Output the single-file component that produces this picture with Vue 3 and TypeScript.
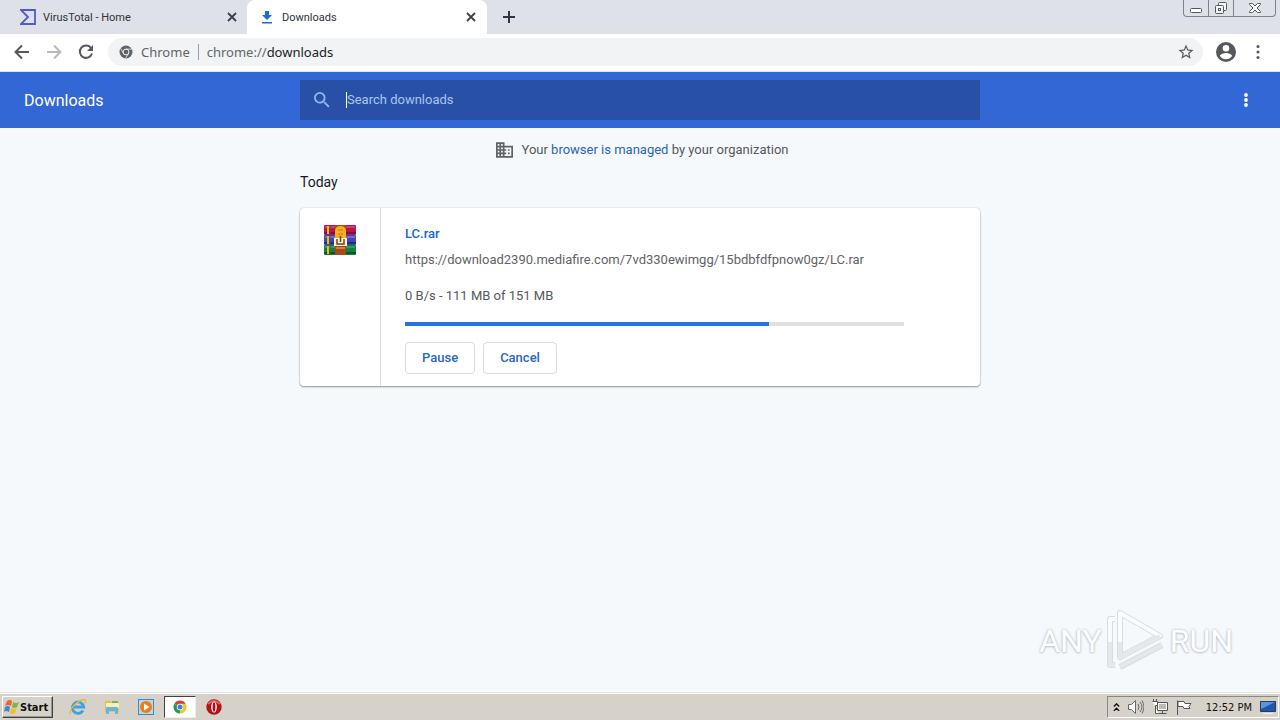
<script setup lang="ts">
import { ref } from 'vue'

interface Tab {
  id: string
  title: string
  active: boolean
}

const tabs: Tab[] = [
  { id: 'virustotal', title: 'VirusTotal - Home', active: false },
  { id: 'downloads', title: 'Downloads', active: true },
]

const query = ref('')
const progress = ref(73)
</script>

<template>
  <div class="screen">
    <header class="tabstrip">
      <div v-for="tab in tabs" :key="tab.id" class="tab" :class="{ active: tab.active }">
        <svg v-if="tab.id === 'virustotal'" class="favicon" viewBox="0 0 16 16" aria-hidden="true">
          <path d="M1 1H15V15H1L8 8Z" fill="none" stroke="#5257d6" stroke-width="1.8" />
        </svg>
        <svg v-else class="favicon" viewBox="0 0 16 16" aria-hidden="true">
          <path d="M6 2h4v4h3L8 11 3 6h3zM3 13h10v1.500H3z" fill="#1a6dd6" />
        </svg>
        <span class="tab-title">{{ tab.title }}</span>
        <button class="tab-close" :aria-label="`Close ${tab.title}`">
          <svg viewBox="0 0 10 10"><path d="M1 1l8 8M9 1L1 9" stroke="#3c4043" stroke-width="1.800" /></svg>
        </button>
      </div>
      <button class="new-tab" aria-label="New tab">
        <svg viewBox="0 0 12 12"><path d="M6 0v12M0 6h12" stroke="#33373b" stroke-width="2" /></svg>
      </button>
      <div class="window-controls">
        <button class="wc" aria-label="Minimize">
          <svg width="14" height="14" viewBox="0 0 14 14"><rect x="1.500" y="7.500" width="11" height="4" rx="1" fill="#fff" stroke="#555961" /></svg>
        </button>
        <button class="wc" aria-label="Restore">
          <svg width="14" height="14" viewBox="0 0 14 14" fill="#f4f5f7" stroke="#555961">
            <rect x="4.500" y="1.500" width="8" height="8" rx="1" />
            <rect x="1.500" y="4.500" width="8" height="8" rx="1" />
            <rect x="4.500" y="7.500" width="2" height="2" />
          </svg>
        </button>
        <button class="wc wide" aria-label="Close">
          <svg width="14" height="14" viewBox="0 0 14 14"><path d="M1.500 2.500h3L7 5l2.500-2.500h3v1L9 7l3.500 3.500v1h-3L7 9l-2.500 2.500h-3v-1L5 7 1.500 3.500z" fill="#fff" stroke="#555961" /></svg>
        </button>
      </div>
    </header>

    <nav class="toolbar" aria-label="Browser toolbar">
      <button class="tool" aria-label="Back">
        <svg viewBox="0 0 16 16" fill="none" stroke="#55585c" stroke-width="2"><path d="M15 8H2M8 1.500L1.500 8 8 14.500" /></svg>
      </button>
      <button class="tool" aria-label="Forward" disabled>
        <svg viewBox="0 0 16 16" fill="none" stroke="#b7babd" stroke-width="2"><path d="M1 8h13M8 1.500L14.500 8 8 14.500" /></svg>
      </button>
      <button class="tool" aria-label="Reload">
        <svg viewBox="0 0 16 16"><path d="M13.100 4A6.200 6.200 0 1 0 14 9.500" fill="none" stroke="#55585c" stroke-width="2" /><path d="M15 1v6H9z" fill="#55585c" /></svg>
      </button>
      <div class="omnibox">
        <svg class="site-icon" viewBox="0 0 14 14" aria-hidden="true">
          <circle cx="7" cy="7" r="6.500" fill="#5f6368" />
          <circle cx="7" cy="7" r="2.900" fill="#5f6368" stroke="#f1f3f4" stroke-width="1" />
          <path d="M7 4.100H13M4.500 8.500L1.700 3.500M9.500 8.500L6.500 13.400" stroke="#f1f3f4" stroke-width=".8" />
        </svg>
        <span class="site">Chrome</span>
        <span class="divider"></span>
        <span class="url"><span class="scheme">chrome://</span>downloads</span>
        <button class="star" aria-label="Bookmark this page">
          <svg viewBox="0 0 24 24" fill="#55585c"><path d="M22 9.240l-7.190-.62L12 2 9.190 8.630 2 9.240l5.460 4.730L5.820 21 12 17.270 18.180 21l-1.630-7.030L22 9.240zM12 15.400l-3.760 2.270 1-4.280-3.320-2.880 4.380-.38L12 6.100l1.710 4.040 4.380.38-3.320 2.880 1 4.280L12 15.400z" /></svg>
        </button>
      </div>
      <button class="profile" aria-label="Profile">
        <svg viewBox="2 2 20 20" fill="#55585c"><path d="M12 2a10 10 0 1 0 0 20 10 10 0 0 0 0-20zm0 3a3.300 3.300 0 1 1 0 6.600A3.300 3.300 0 0 1 12 5zm0 14.200a7.200 7.200 0 0 1-6-3.220c.03-1.990 4-3.080 6-3.080s5.970 1.090 6 3.080a7.200 7.200 0 0 1-6 3.220z" /></svg>
      </button>
      <button class="menu" aria-label="Chrome menu">
        <svg viewBox="0 0 4 16" fill="#55585c"><circle cx="2" cy="2.500" r="1.500" /><circle cx="2" cy="8" r="1.500" /><circle cx="2" cy="13.500" r="1.500" /></svg>
      </button>
    </nav>

    <div class="page">
      <header class="page-header">
        <h1>Downloads</h1>
        <label class="search">
          <svg viewBox="3 3 18 18" fill="#93b7ee" aria-hidden="true"><path d="M15.500 14h-.79l-.28-.27A6.470 6.470 0 0 0 16 9.500 6.500 6.500 0 1 0 9.500 16c1.610 0 3.090-.59 4.230-1.570l.27.280v.79l5 4.990L20.490 19l-4.990-5zm-6 0C7.010 14 5 11.990 5 9.500S7.010 5 9.500 5 14 7.010 14 9.500 11.990 14 9.500 14z" /></svg>
          <span class="caret"></span>
          <input v-model="query" type="text" placeholder="Search downloads" aria-label="Search downloads" />
        </label>
        <button class="more" aria-label="More actions">
          <svg viewBox="0 0 4 16" fill="#fff"><circle cx="2" cy="3" r="1.900" /><circle cx="2" cy="8" r="1.900" /><circle cx="2" cy="13" r="1.900" /></svg>
        </button>
      </header>

      <main>
        <p class="managed">
          <svg viewBox="2 3 20 18" fill="#5f6368" aria-hidden="true"><path d="M12 7V3H2v18h20V7H12zM6 19H4v-2h2v2zm0-4H4v-2h2v2zm0-4H4V9h2v2zm0-4H4V5h2v2zm4 12H8v-2h2v2zm0-4H8v-2h2v2zm0-4H8V9h2v2zm0-4H8V5h2v2zm10 12h-8v-2h2v-2h-2v-2h2v-2h-2V9h8v10zm-2-8h-2v2h2v-2zm0 4h-2v2h2v-2z" /></svg>
          <span>Your <a href="#">browser is managed</a> by your organization</span>
        </p>
        <h2>Today</h2>
        <article class="card">
          <div class="file-icon">
            <svg viewBox="0 0 32 32" aria-hidden="true">
              <rect y="1" width="32" height="10" rx="1" fill="#b3174b" />
              <path d="M1 3h30" stroke="#d0406c" stroke-width="2" />
              <path d="M0 9h32" stroke="#85103a" stroke-width="2" />
              <rect y="11" width="32" height="10" rx="1" fill="#3d46b5" />
              <path d="M1 13h30" stroke="#686fd0" stroke-width="2" />
              <path d="M0 19h32" stroke="#252c83" stroke-width="2" />
              <rect y="21" width="32" height="10" rx="1" fill="#13803d" />
              <path d="M1 23h30" stroke="#30a055" stroke-width="2" />
              <path d="M0 29h32" stroke="#07572a" stroke-width="2" />
              <path d="M4 2v8M4 12v8M4 22v8" stroke="#e9b927" stroke-width="2" />
              <path d="M6 2v8M6 12v8M6 22v8" stroke="#704d22" />
              <rect x="11" y="1" width="11" height="30" fill="#a34b1d" />
              <path d="M11 14V6q1-4 5.500-4T22 6v8z" fill="#f5ad22" />
              <path d="M14 6h5M14 10h5" stroke="#d98a17" stroke-width="1.500" />
              <rect x="10" y="14" width="13" height="8" fill="#fff1db" />
              <path d="M13 15v5h7v-5M16.500 12v6" fill="none" stroke="#74401d" stroke-width="1.500" />
              <path d="M12 24h9" stroke="#d37a3e" stroke-width="2" />
            </svg>
          </div>
          <div class="details">
            <a class="file-name" href="#">LC.rar</a>
            <a class="file-url" href="#">https://download2390.mediafire.com/7vd330ewimgg/15bdbfdfpnow0gz/LC.rar</a>
            <p class="status">0 B/s - 111 MB of 151 MB</p>
            <div class="track" role="progressbar" aria-label="Download progress" :aria-valuenow="progress" aria-valuemin="0" aria-valuemax="100">
              <div class="bar" :style="{ width: `${progress}%` }"></div>
            </div>
            <div class="actions">
              <button>Pause</button>
              <button>Cancel</button>
            </div>
          </div>
        </article>
      </main>

      <div class="watermark">
        <span>ANY</span>
        <svg viewBox="0 0 60 66" fill="none" aria-hidden="true">
          <g stroke="#d9dde0" stroke-width="6" stroke-linejoin="round">
            <path d="M9 11H4v46h5" />
            <path d="M14 5v44L54 28z" />
            <path d="M14 59l42-22" />
          </g>
          <g stroke="#fafcfd" stroke-width="4" stroke-linejoin="round">
            <path d="M9 11H4v46h5" />
            <path d="M14 5v44L54 28z" />
          </g>
          <path d="M4 34v23h5M14 59l42-22M14 34v15l40-21" stroke="#e5e7e9" stroke-width="4" stroke-linejoin="round" />
        </svg>
        <span>RUN</span>
      </div>
    </div>

    <footer class="taskbar">
      <button class="start">
        <svg viewBox="0 0 16 16" aria-hidden="true">
          <path d="M3 2q3-2 5 0L7 7Q4 5 1 7z" fill="#ec652a" />
          <path d="M9 3q3 2 6 0l-2 5q-3 2-5 0z" fill="#7bb83a" />
          <path d="M1 8q3-2 5 0l-1 5q-3-2-5 0z" fill="#3888d8" />
          <path d="M7 9q3 2 6 0l-2 5q-3 2-5 0z" fill="#f5be25" />
        </svg>
        Start
      </button>
      <div class="launchers">
        <button class="task" aria-label="Internet Explorer">
          <svg viewBox="0 0 18 18" fill="none">
            <path d="M14 12.500A5.700 5.700 0 1 1 14.700 9H5" stroke="#3ba4e4" stroke-width="2.800" />
            <path d="M2 16C-2 14 8 2 15.500 1.500q2 1 .5 3.500" stroke="#e8b936" stroke-width="1.300" />
          </svg>
        </button>
        <button class="task" aria-label="Windows Explorer">
          <svg viewBox="0 0 18 18">
            <path d="M2 3h5l1 1h8v10H2z" fill="#e7bd4d" />
            <path d="M3 5h13v5H3z" fill="#faf0b3" /><path d="M9 4h6" stroke="#4eae5c" stroke-width="1.500" />
            <path d="M3 16V10q0-1 1-1h10q1 0 1 1v6h-3v-3H6v3z" fill="#66b6de" />
          </svg>
        </button>
        <button class="task" aria-label="Media Player">
          <svg viewBox="0 0 18 18">
            <rect x="1.500" y="1.500" width="15" height="15" fill="#b7d8f1" stroke="#4786bd" />
            <circle cx="9" cy="9" r="6" fill="#f07b12" /><path d="M7 5.500L12.500 9 7 12.500z" fill="#fff" />
          </svg>
        </button>
        <button class="task current" aria-label="Google Chrome">
          <svg viewBox="0 0 18 18">
            <path d="M9 9L3.370 5.750A6.500 6.500 0 0 1 14.630 5.750z" fill="#df3c30" />
            <path d="M9 9L3.370 5.750A6.500 6.500 0 0 0 9 15.500z" fill="#249c50" />
            <path d="M9 9V15.500A6.500 6.500 0 0 0 14.630 5.750L9 5.750z" fill="#f8c622" />
            <circle cx="9" cy="9" r="3.200" fill="#fff" /><circle cx="9" cy="9" r="2.500" fill="#3c7de4" />
          </svg>
        </button>
        <button class="task" aria-label="Opera">
          <svg viewBox="0 0 18 18"><circle cx="9" cy="9" r="7.700" fill="#b31318" /><path d="M3 6q6-6 12 0" stroke="#dc6565" stroke-width="2" fill="none" /><ellipse cx="9" cy="9" rx="2.800" ry="5.500" fill="#fff" /><ellipse cx="9" cy="9" rx="1.400" ry="4.700" fill="#a81217" /></svg>
        </button>
      </div>
      <div class="tray">
        <button class="tray-button chevrons" aria-label="Show hidden icons">
          <svg viewBox="0 0 8 10" fill="none" stroke="#111" stroke-width="1.600"><path d="M1 4l3-3 3 3M1 9l3-3 3 3" /></svg>
        </button>
        <button class="tray-button" aria-label="Volume">
          <svg viewBox="0 0 16 16" fill="#fff" stroke="#686868"><path d="M.5 5.500h3l4-4v13l-4-4h-3z" /><path d="M10 5q2 3 0 6M12 3q4 5 0 10M14 1.500q4 6.500 0 13" fill="none" /></svg>
        </button>
        <button class="tray-button" aria-label="Network">
          <svg viewBox="0 0 16 16" fill="#fff" stroke="#555"><path d="M5.500 3.500h10v8h-10zM6.500 14.500h8M10.500 11.500v3" /><path d="M7 5h7v5H7z" fill="#bbb" stroke="none" /><path d="M.5 2.500h5v4h-2v8h3" /><path d="M1.500 0v2M4.500 0v2" /></svg>
        </button>
        <button class="tray-button" aria-label="Action Center">
          <svg viewBox="0 0 16 16" fill="#fff" stroke="#555"><path d="M1.500 1.500V16" /><path d="M2 2.500h6l1 2h6l-2 3 1 2H8l-1-2H2z" /></svg>
        </button>
        <time>12:52 PM</time>
        <button class="tray-button" aria-label="Show desktop">
          <svg viewBox="0 0 16 16"><path d="M.5 2.500h15v10H.5z" fill="#1e57ac" stroke="#263c5d" /><path d="M1 3h14L1 10z" fill="#5b97df" /><path d="M3 14.500h10" stroke="#eee" /></svg>
        </button>
      </div>
    </footer>
  </div>
</template>

<style>
body {
  margin: 0;
}
</style>

<style scoped>
* {
  box-sizing: border-box;
}
button {
  padding: 0;
  border: 0;
  background: none;
  font: inherit;
  color: inherit;
}
svg {
  display: block;
  flex: none;
}
h1,
h2,
p {
  margin: 0;
  font-weight: 400;
}
a {
  color: #2663c4;
  text-decoration: none;
}
.screen {
  display: flex;
  flex-direction: column;
  min-height: 100vh;
  background: #f6f9fc;
  font-family: Roboto, sans-serif;
  font-size: 13px;
  color: #55585c;
}

.tabstrip {
  display: flex;
  height: 34px;
  background: #dee1e8;
  font-size: 11px;
  color: #303236;
}
.tab {
  display: flex;
  align-items: center;
  width: 240px;
  padding: 0 8px 0 12px;
}
.tab:first-child {
  width: 247px;
  padding-left: 20px;
  padding-right: 7px;
}
.tab.active {
  background: #fff;
  border-radius: 8px 8px 0 0;
}
.favicon {
  width: 16px;
  height: 16px;
}
.tab-title {
  flex: 1;
  margin-left: 7px;
}
.tab-close {
  padding: 3px;
}
.tab-close svg {
  width: 10px;
  height: 10px;
}
.new-tab {
  padding: 0 16px;
}
.new-tab svg {
  width: 12px;
  height: 12px;
}
.window-controls {
  display: flex;
  height: 17px;
  margin-left: auto;
  margin-right: 4px;
  border: 1px solid #7f838b;
  border-top: 0;
  border-radius: 0 0 4px 4px;
}
.wc {
  display: grid;
  place-items: center;
  width: 25px;
  border-right: 1px solid #7f838b;
}
.wc.wide {
  width: 41px;
  border-right: 0;
}

.toolbar {
  display: flex;
  align-items: center;
  height: 38px;
  padding: 0 20px 2px 14px;
  background: #fff;
  border-bottom: 1px solid #dfe3ea;
}
.tool {
  width: 16px;
  margin-right: 16px;
}
.tool:nth-child(3) {
  margin-right: 14px;
}
.omnibox {
  display: flex;
  flex: 1;
  align-items: center;
  height: 28px;
  padding: 0 8px 0 11px;
  background: #f1f3f4;
  border-radius: 14px;
  font-family: "Noto Sans", sans-serif;
  font-size: 13px;
  color: #202124;
}
.site-icon {
  width: 14px;
  height: 14px;
}
.site {
  margin-left: 8px;
  color: #5f6368;
}
.divider {
  width: 1px;
  height: 16px;
  margin: 0 8px;
  background: #9b9ea2;
}
.scheme {
  color: #63676b;
}
.star {
  width: 18px;
  margin-left: auto;
}
.profile {
  width: 20px;
  margin-left: 13px;
}
.menu {
  width: 4px;
  margin-left: 20px;
}

.page {
  position: relative;
  flex: 1;
}
.page-header {
  display: grid;
  grid-template-columns: 1fr minmax(0, 680px) 1fr;
  align-items: center;
  height: 56px;
  background: #3367d6;
  color: #fff;
}
h1 {
  padding-left: 24px;
  font-size: 16px;
}
.search {
  display: flex;
  align-items: center;
  height: 40px;
  padding: 0 14px;
  background: #2950a7;
}
.search svg {
  width: 16px;
  height: 16px;
}
.caret {
  width: 1px;
  height: 16px;
  margin-left: 16px;
  background: #fff;
}
.search input {
  flex: 1;
  min-width: 0;
  padding: 0 0 2px;
  border: 0;
  outline: 0;
  background: none;
  font: inherit;
  color: #fff;
}
.search input::placeholder {
  color: #a9c5f2;
  opacity: 1;
}
.more {
  justify-self: end;
  width: 4px;
  margin-right: 32px;
}
main {
  width: 100%;
  max-width: 680px;
  margin: 0 auto;
}
.managed {
  display: flex;
  align-items: center;
  justify-content: center;
  gap: 9px;
  height: 44px;
  padding-left: 4px;
}
.managed span {
  padding-bottom: 2px;
}
.managed svg {
  width: 17px;
  height: 16px;
}
h2 {
  font-size: 14px;
  line-height: 20px;
  color: #17191c;
}
.card {
  display: flex;
  margin-top: 16px;
  background: #fff;
  border-radius: 4px;
  box-shadow: 0 1px 2px #8f9499, 0 0 1px #b4b8bc;
}
.file-icon {
  width: 81px;
  padding: 16px 0 0 24px;
  border-right: 1px solid #dcdfe2;
}
.file-icon svg {
  width: 32px;
  height: 32px;
}
.details {
  display: flex;
  flex: 1;
  flex-direction: column;
  align-items: flex-start;
  min-width: 0;
  padding: 16px 76px 12px 24px;
  line-height: 20px;
}
.file-name {
  font-weight: 500;
  color: #1a66d0;
}
.file-url {
  margin-top: 6px;
  color: #5f6368;
}
.status {
  margin-top: 16px;
}
.track {
  align-self: stretch;
  height: 4px;
  margin-top: 16px;
  background: #dfe0e1;
}
.bar {
  height: 4px;
  background: #2472e3;
}
.actions {
  display: flex;
  gap: 8px;
  margin-top: 16px;
}
.actions button {
  height: 32px;
  padding: 0 16px;
  border: 1px solid #dadce0;
  border-radius: 4px;
  font-weight: 500;
  color: #2868bd;
}
.watermark {
  position: absolute;
  right: 47px;
  bottom: 18px;
  display: flex;
  align-items: center;
  gap: 4px;
  font-size: 32px;
  color: #fcfdfe;
  text-shadow: 0 0 3px #b4b8bc, 0 1px 2px #cdd1d4;
}
.watermark svg {
  width: 60px;
  height: 66px;
}

.taskbar {
  display: flex;
  align-items: center;
  height: 28px;
  padding: 2px 1px 1px 2px;
  background: #d6d1c9;
  border-top: 1px solid #e5e2dd;
  box-shadow: inset 0 1px #fff;
  font-family: "DejaVu Sans Condensed", "DejaVu Sans", sans-serif;
  font-size: 11px;
  color: #111;
}
.start {
  display: flex;
  align-items: center;
  height: 22px;
  padding: 0 4px 0 1px;
  border: 1px solid;
  border-color: #fff #45423e #45423e #fff;
  box-shadow: inset -1px -1px #999590;
  font-weight: 700;
}
.start svg {
  width: 16px;
  height: 16px;
}
.launchers {
  display: flex;
  gap: 2px;
  margin-left: 9px;
}
.task {
  display: grid;
  place-items: center;
  width: 32px;
  height: 22px;
}
.task svg {
  width: 18px;
  height: 18px;
}
.task.current {
  background: #fff;
  border: 1px solid;
  border-color: #45423e #eee #eee #45423e;
}
.tray {
  display: flex;
  align-items: center;
  gap: 8px;
  height: 22px;
  margin-left: auto;
  padding: 0 2px 0 5px;
  border: 1px solid;
  border-color: #8c8780 #fff #fff #8c8780;
}
.tray-button {
  width: 16px;
}
.chevrons {
  width: 7px;
}
.tray time {
  margin: 0 0 0 6px;
}
</style>
